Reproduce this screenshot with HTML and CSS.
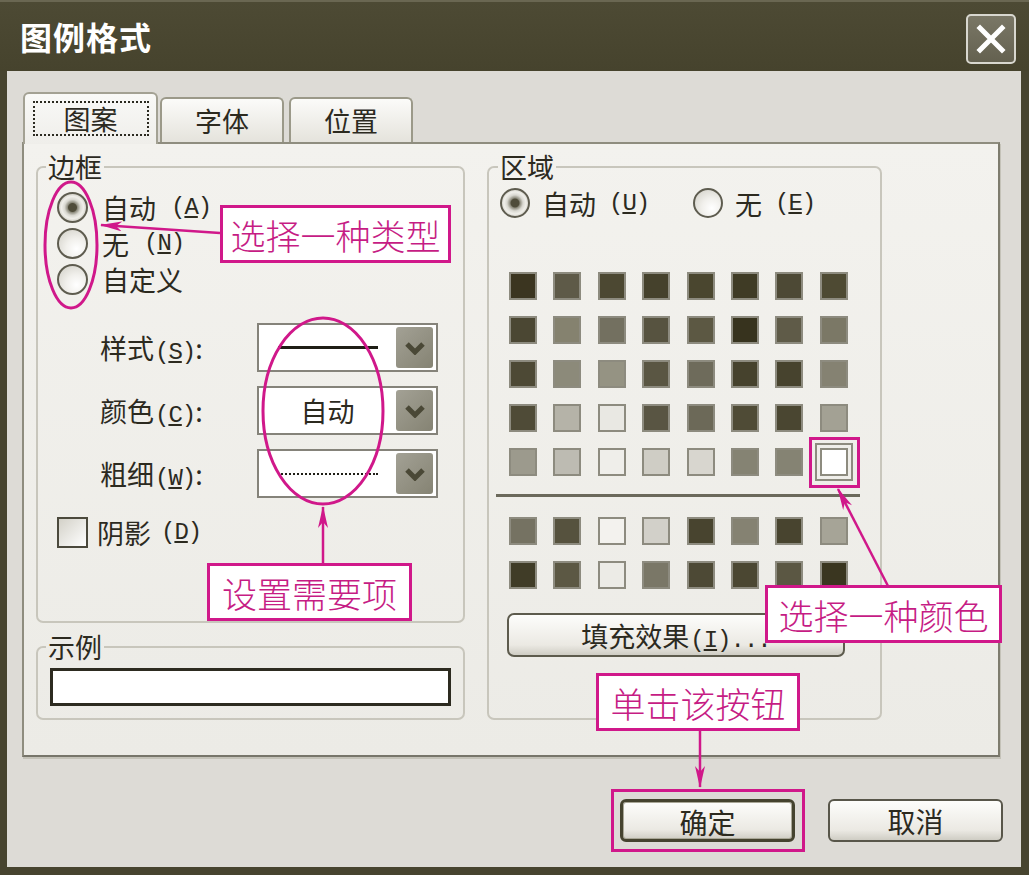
FILE: index.html
```html
<!DOCTYPE html>
<html lang="zh-CN">
<head>
    <meta charset="UTF-8">
    <meta name="viewport" content="width=device-width, initial-scale=1.0">
    <title>图例格式</title>
    <link rel="stylesheet" href="styles.css">
</head>
<body>
<div class="window">
    <div class="titlebar">
        <h1 class="title">图例格式</h1>
        <button class="close-btn" aria-label="关闭">
            <svg width="34" height="34" viewBox="0 0 34 34"><path d="M6 6 L28 28 M28 6 L6 28" stroke="#fff" stroke-width="5" stroke-linecap="square"/></svg>
        </button>
    </div>

    <div class="client">
        <div class="tabs">
            <div class="tab active"><span class="focus">图案</span></div>
            <div class="tab">字体</div>
            <div class="tab last">位置</div>
        </div>

        <div class="panel">
            <div class="left-col">
                <fieldset class="group border-group">
                    <legend>边框</legend>
                    <div class="radio-list">
                        <label class="radio-row"><span class="radio checked"></span>自动<span class="key">(<u>A</u>)</span></label>
                        <label class="radio-row"><span class="radio"></span>无<span class="key">(<u>N</u>)</span></label>
                        <label class="radio-row"><span class="radio"></span>自定义</label>
                    </div>
                    <div class="field-list">
                        <div class="field-row">
                            <span class="field-label">样式<span class="key">(<u>S</u>)</span>:</span>
                            <div class="combo"><span class="combo-value"><span class="line solid"></span></span><span class="drop"></span></div>
                        </div>
                        <div class="field-row">
                            <span class="field-label">颜色<span class="key">(<u>C</u>)</span>:</span>
                            <div class="combo"><span class="combo-value">自动</span><span class="drop"></span></div>
                        </div>
                        <div class="field-row">
                            <span class="field-label">粗细<span class="key">(<u>W</u>)</span>:</span>
                            <div class="combo"><span class="combo-value"><span class="line dotted"></span></span><span class="drop"></span></div>
                        </div>
                    </div>
                    <label class="check-row"><span class="checkbox"></span>阴影<span class="key">(<u>D</u>)</span></label>
                </fieldset>

                <fieldset class="group sample-group">
                    <legend>示例</legend>
                    <div class="sample-box"></div>
                </fieldset>
            </div>

            <fieldset class="group area-group">
                <legend>区域</legend>
                <div class="area-radios">
                    <label class="radio-row auto"><span class="radio checked"></span>自动<span class="key">(<u>U</u>)</span></label>
                    <label class="radio-row"><span class="radio"></span>无<span class="key">(<u>E</u>)</span></label>
                </div>
                <div class="swatches" id="mainSwatches"></div>
                <div class="swatch-sep"></div>
                <div class="swatches extra" id="extraSwatches"></div>
                <button class="fill-btn">填充效果<span class="key">(<u>I</u>)...</span></button>
            </fieldset>
        </div>

        <div class="actions">
            <button class="btn default">确定</button>
            <button class="btn">取消</button>
        </div>
    </div>

    <!-- annotations -->
    <svg class="marks" width="1029" height="875" viewBox="0 0 1029 875">
        <defs>
            <marker id="head" viewBox="0 0 22 10" refX="21" refY="5" markerWidth="22" markerHeight="10" orient="auto" markerUnits="userSpaceOnUse">
                <path d="M0 0 L22 5 L0 10 L6 5 Z" fill="#d0188a"/>
            </marker>
        </defs>
        <g fill="none" stroke="#d0188a" stroke-width="3">
            <ellipse cx="71" cy="245" rx="26" ry="63"/>
            <ellipse cx="323" cy="411" rx="60" ry="93"/>
            <rect x="810.5" y="438.5" width="48" height="48"/>
            <rect x="612.5" y="790.5" width="191" height="60"/>
        </g>
        <g stroke="#d0188a" stroke-width="2.5" marker-end="url(#head)">
            <line x1="220" y1="233" x2="101" y2="225"/>
            <line x1="323" y1="563" x2="323" y2="507"/>
            <line x1="888" y1="586" x2="838" y2="489"/>
            <line x1="700" y1="731" x2="700" y2="787"/>
        </g>
    </svg>
    <div class="callout c-type">选择一种类型</div>
    <div class="callout c-items">设置需要项</div>
    <div class="callout c-color">选择一种颜色</div>
    <div class="callout c-ok">单击该按钮</div>
</div>

<script>
    const mainColors = [
        '#3b3520', '#5e5a48', '#4c4832', '#45412c', '#4a462f', '#3f3b25', '#4d4935', '#4e4a33',
        '#4b4733', '#85826f', '#737060', '#575340', '#5c5843', '#37331e', '#5f5b48', '#7b7866',
        '#4d4935', '#8c8a7a', '#959383', '#5a5643', '#6e6b5b', '#46422d', '#47432e', '#858272',
        '#4f4b37', '#b5b3a8', '#e9e8e3', '#595543', '#6c6958', '#4f4b36', '#4a4631', '#a3a194',
        '#9c9a8d', '#bdbbb2', '#efeeea', '#cfcdc5', '#d8d6cf', '#858373', '#858373', '#ffffff'
    ];
    const extraColors = [
        '#757262', '#56523e', '#f3f2ee', '#d2d0c9', '#48442f', '#858272', '#48442f', '#a6a497',
        '#403c27', '#5c5844', '#ecebe6', '#7a7767', '#4d4935', '#4b4732', '#5b5743', '#3a3620'
    ];

    function fill(id, colors, selected) {
        const box = document.getElementById(id);
        colors.forEach((c, i) => {
            const cell = document.createElement('span');
            cell.className = 'swatch' + (i === selected ? ' selected' : '');
            cell.style.background = c;
            box.appendChild(cell);
        });
    }
    fill('mainSwatches', mainColors, 39);
    fill('extraSwatches', extraColors, -1);
</script>
</body>
</html>
```

FILE: styles.css
```css
body {
    margin: 0;
    background: #47442f;
    font-family: "Noto Sans CJK SC", sans-serif;
    color: #2c2a1f;
}
.window {
    position: relative;
    width: 1029px;
    height: 875px;
    background: #47442f;
    overflow: hidden;
}

/* title bar */
.titlebar {
    height: 71px;
    display: flex;
    align-items: center;
    padding: 0 13px 0 20px;
    box-sizing: border-box;
    background: linear-gradient(#4d4a34, #46432d);
    border-top: 2px solid #6a6752;
}
.title {
    margin: -2px 0 0 0;
    font-size: 32px;
    font-weight: 700;
    color: #fff;
    letter-spacing: 1px;
    line-height: 1;
}
.close-btn {
    margin: 4px 0 0 auto;
    width: 50px;
    height: 50px;
    padding: 0;
    border: 2px solid #d8d7cf;
    border-radius: 5px;
    background: linear-gradient(#7a7766, #646150);
    display: flex;
    align-items: center;
    justify-content: center;
}

/* client area */
.client {
    margin: 0 8px 0 7px;
    height: 796px;
    box-sizing: border-box;
    background: #dddbd6;
    padding: 21px 0 0 15px;
}
.tabs {
    display: flex;
    align-items: flex-end;
    height: 50px;
    position: relative;
    z-index: 1;
}
.tab {
    width: 124px;
    height: 45px;
    box-sizing: border-box;
    border: 2px solid #9b9989;
    border-bottom: none;
    border-radius: 6px 6px 0 0;
    background: linear-gradient(#fbfbf9, #e5e3dc);
    font-size: 27px;
    display: flex;
    align-items: center;
    justify-content: center;
    margin-left: 2px;
}
.tab.last {
    margin-left: 5px;
}
.tab.active {
    width: 135px;
    height: 52px;
    margin: 0 0 -2px 1px;
    background: linear-gradient(#f9f9f7, #efeeea);
    border-color: #a3a193;
}
.focus {
    width: 116px;
    height: 35px;
    box-sizing: border-box;
    border: 2px dotted #2b2a20;
    display: flex;
    align-items: center;
    justify-content: center;
    margin-top: -2px;
}

.panel {
    width: 978px;
    height: 615px;
    box-sizing: border-box;
    border: 2px solid #8f8d7f;
    border-right-color: #7e7c6e;
    border-bottom-color: #77756a;
    box-shadow: 1px 2px 0 #c4c2b8;
    background: linear-gradient(#f3f2ee, #ecebe6);
    display: flex;
    gap: 22px;
    padding: 7px 0 0 12px;
}
.left-col {
    width: 429px;
}

.group {
    margin: 0;
    padding: 0;
    border: 2px solid #c8c6bc;
    border-radius: 7px;
    box-sizing: border-box;
    min-width: 0;
}
.group legend {
    font-size: 27px;
    line-height: 32px;
    padding: 0 2px;
    margin-left: 8px;
}
.border-group {
    width: 429px;
    height: 472px;
}
.sample-group {
    width: 429px;
    height: 89px;
    margin-top: 8px;
}
.area-group {
    width: 395px;
    height: 569px;
}
.area-group legend {
    margin-left: 9px;
}

.key {
    font-family: "Liberation Mono", monospace;
    font-size: 24px;
    letter-spacing: -1px;
    margin-left: 1px;
}

/* radios and checkbox */
.radio-list {
    padding: 6px 0 0 19px;
}
.radio-row, .check-row {
    display: flex;
    align-items: center;
    height: 36px;
    gap: 14px;
    font-size: 27px;
}
.radio {
    width: 31px;
    height: 31px;
    flex: none;
    box-sizing: border-box;
    border: 2px solid #5e5c4f;
    border-radius: 50%;
    background: radial-gradient(circle at 65% 70%, #ffffff 0, #f1f0ec 40%, #cfcdc4 100%);
}
.radio.checked {
    background: radial-gradient(circle, #4f4c3a 0 4px, #8d8b7d 5px, #d9d8d1 8px, #f0efea 11px, #c9c7bd 15px);
}
.checkbox {
    width: 31px;
    height: 31px;
    flex: none;
    box-sizing: border-box;
    border: 2px solid #4b493c;
    background: linear-gradient(135deg, #d3d1c8, #ffffff);
}
.check-row {
    margin-top: 16px;
    padding-left: 19px;
    gap: 9px;
}

/* combo rows */
.field-list {
    margin-top: 26px;
    padding-left: 62px;
}
.field-row {
    display: flex;
    align-items: center;
    height: 49px;
    margin-bottom: 14px;
}
.field-row:last-child {
    margin-bottom: 0;
}
.field-label {
    width: 157px;
    font-size: 27px;
}
.combo {
    width: 181px;
    height: 49px;
    box-sizing: border-box;
    border: 2px solid #85837a;
    background: #fff;
    display: flex;
    align-items: center;
    padding: 2px 3px 2px 0;
}
.combo-value {
    flex: 1;
    display: flex;
    align-items: center;
    justify-content: center;
    font-size: 27px;
}
.line {
    width: 100px;
    height: 0;
}
.line.solid {
    border-top: 3px solid #1f1e16;
}
.line.dotted {
    border-top: 2px dotted #1f1e16;
}
.drop {
    width: 37px;
    height: 41px;
    border-radius: 3px;
    background-image:
        url("data:image/svg+xml,%3Csvg xmlns='http://www.w3.org/2000/svg' width='22' height='14'%3E%3Cpath d='M3 3 L11 11 L19 3' fill='none' stroke='%234a4836' stroke-width='5'/%3E%3C/svg%3E"),
        linear-gradient(135deg, #a3a195, #858373);
    background-repeat: no-repeat;
    background-position: center, 0 0;
}

.sample-box {
    margin: 5px 0 0 12px;
    width: 401px;
    height: 38px;
    box-sizing: border-box;
    border: 3px solid #2d2b20;
    background: #fff;
}

/* area */
.area-radios {
    display: flex;
    padding: 2px 0 0 11px;
}
.area-radios .radio {
    width: 30px;
    height: 30px;
}
.area-radios .auto {
    width: 193px;
    gap: 15px;
}
.area-radios .radio-row {
    gap: 12px;
}
.swatches {
    display: grid;
    grid-template-columns: repeat(8, 28px);
    column-gap: 16.4px;
    row-gap: 16px;
    margin: 51px 0 0 20px;
}
.swatches.extra {
    margin-top: 20px;
}
.swatch {
    width: 28px;
    height: 28px;
    box-sizing: border-box;
    border: 2px solid #8d8b7f;
}
.swatch.selected {
    outline: 2px solid #8d8b7f;
    outline-offset: 3px;
}
.swatch-sep {
    margin: 18px 0 0 7px;
    width: 364px;
    height: 3px;
    background: #6b695b;
}
.fill-btn {
    margin: 24px 0 0 18px;
    width: 338px;
    height: 44px;
    border: 2px solid #5d5b4d;
    border-radius: 7px;
    background: linear-gradient(#fdfdfb, #ebe9e3 75%, #cfcdc4);
    font-family: inherit;
    font-size: 27px;
    color: #2c2a1f;
    padding: 0;
}

/* buttons */
.actions {
    display: flex;
    justify-content: flex-end;
    gap: 33px;
    margin-top: 42px;
    padding-right: 18px;
}
.btn {
    width: 175px;
    height: 43px;
    border: 2px solid #58564a;
    border-radius: 6px;
    background: linear-gradient(#fdfdfb, #ebe9e3 75%, #cfcdc4);
    font-family: inherit;
    font-size: 28px;
    color: #2c2a1f;
    padding: 0;
}
.btn.default {
    border: 3px solid #45432f;
    box-shadow: inset 0 0 0 1px #a9a797;
}

/* annotations */
.marks {
    position: absolute;
    left: 0;
    top: 0;
    pointer-events: none;
}
.callout {
    position: absolute;
    height: 58px;
    box-sizing: border-box;
    border: 3px solid #d0188a;
    background: #fff;
    color: #c61c84;
    font-family: "Noto Sans CJK SC", sans-serif;
    font-size: 35px;
    font-weight: 300;
    display: flex;
    align-items: center;
    justify-content: center;
    line-height: 1;
}
.c-type { left: 220px; top: 205px; width: 231px; }
.c-items { left: 207px; top: 563px; width: 205px; }
.c-color { left: 765px; top: 585px; width: 237px; }
.c-ok { left: 596px; top: 673px; width: 204px; }
```
